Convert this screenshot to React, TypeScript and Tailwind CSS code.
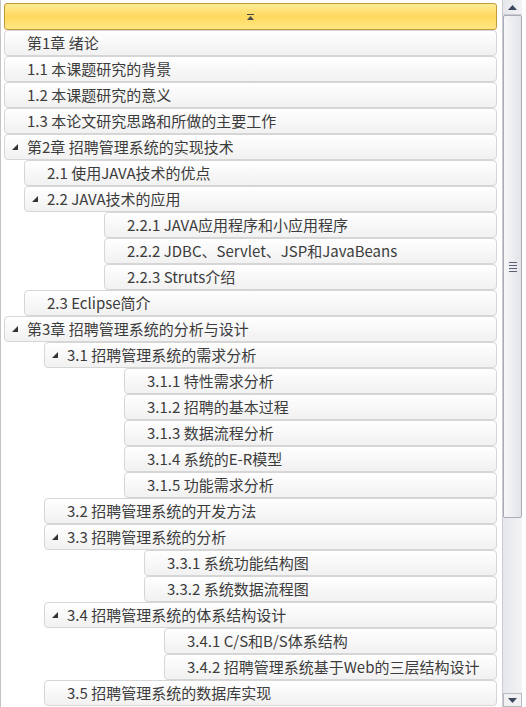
import React from "react";

type Item = { label: string; indent: number; open?: boolean };

const items: Item[] = [
  { label: "第1章 绪论", indent: 0 },
  { label: "1.1 本课题研究的背景", indent: 0 },
  { label: "1.2 本课题研究的意义", indent: 0 },
  { label: "1.3 本论文研究思路和所做的主要工作", indent: 0 },
  { label: "第2章 招聘管理系统的实现技术", indent: 0, open: true },
  { label: "2.1 使用JAVA技术的优点", indent: 20 },
  { label: "2.2 JAVA技术的应用", indent: 20, open: true },
  { label: "2.2.1 JAVA应用程序和小应用程序", indent: 100 },
  { label: "2.2.2 JDBC、Servlet、JSP和JavaBeans", indent: 100 },
  { label: "2.2.3 Struts介绍", indent: 100 },
  { label: "2.3 Eclipse简介", indent: 20 },
  { label: "第3章 招聘管理系统的分析与设计", indent: 0, open: true },
  { label: "3.1 招聘管理系统的需求分析", indent: 40, open: true },
  { label: "3.1.1 特性需求分析", indent: 120 },
  { label: "3.1.2 招聘的基本过程", indent: 120 },
  { label: "3.1.3 数据流程分析", indent: 120 },
  { label: "3.1.4 系统的E-R模型", indent: 120 },
  { label: "3.1.5 功能需求分析", indent: 120 },
  { label: "3.2 招聘管理系统的开发方法", indent: 40 },
  { label: "3.3 招聘管理系统的分析", indent: 40, open: true },
  { label: "3.3.1 系统功能结构图", indent: 140 },
  { label: "3.3.2 系统数据流程图", indent: 140 },
  { label: "3.4 招聘管理系统的体系结构设计", indent: 40, open: true },
  { label: "3.4.1 C/S和B/S体系结构", indent: 160 },
  { label: "3.4.2 招聘管理系统基于Web的三层结构设计", indent: 160 },
  { label: "3.5 招聘管理系统的数据库实现", indent: 40 },
];

const indentClass: Record<number, string> = {
  0: "ml-0",
  20: "ml-[20px]",
  40: "ml-[40px]",
  100: "ml-[100px]",
  120: "ml-[120px]",
  140: "ml-[140px]",
  160: "ml-[160px]",
};

function Arrow() {
  return (
    <svg width="6" height="6" viewBox="0 0 6 6" className="absolute left-[7px] top-[9px]">
      <polygon points="6,0 6,6 0,6" fill="#333" />
    </svg>
  );
}

function Row({ item }: { item: Item }) {
  return (
    <div
      className={`relative h-[26px] shrink-0 rounded-[4px] border border-[#d6d6d6] bg-gradient-to-b from-white to-[#f1f1f1] pl-[22px] text-[15px] leading-[24px] text-[#3c3c3c] whitespace-nowrap ${indentClass[item.indent]}`}
    >
      {item.open && <Arrow />}
      {item.label}
    </div>
  );
}

function Scrollbar() {
  return (
    <div className="flex h-[707px] w-[20px] flex-col border-l border-[#c9cad2] bg-gradient-to-r from-[#e6e7eb] to-[#f3f3f5]">
      <div className="flex h-[15px] items-center justify-center border-b border-[#c9cad2]">
        <svg width="9" height="5" viewBox="0 0 9 5">
          <polygon points="4.5,0 9,5 0,5" fill="#3e4760" />
        </svg>
      </div>
      <div className="flex h-[503px] items-center justify-center rounded-[2px] border border-[#a9abb6] bg-gradient-to-r from-[#f7f7f9] to-[#e3e4e9]">
        <div className="flex flex-col gap-[2px]">
          <div className="h-px w-[8px] bg-[#5b6179]" />
          <div className="h-px w-[8px] bg-[#5b6179]" />
          <div className="h-px w-[8px] bg-[#5b6179]" />
          <div className="h-px w-[8px] bg-[#5b6179]" />
        </div>
      </div>
      <div className="flex-1" />
      <div className="flex h-[14px] items-center justify-center border border-[#b8bac4] bg-[#f1f1f3]">
        <svg width="9" height="5" viewBox="0 0 9 5">
          <polygon points="0,0 9,0 4.5,5" fill="#3e4760" />
        </svg>
      </div>
    </div>
  );
}

export default function App() {
  return (
    <div
      className="flex h-[707px] w-[526px] overflow-hidden bg-white"
      style={{ fontFamily: '"Noto Sans CJK SC", "Noto Sans", sans-serif' }}
    >
      <div className="flex w-[502px] flex-col border-l border-[#c4c4c4] pl-[3px] pr-[5px] pt-[3px]">
        <div className="flex h-[27px] shrink-0 items-center justify-center rounded-[3px] border border-[#c49a3c] bg-gradient-to-b from-[#ffeb94] via-[#ffd95e] to-[#ffe783]">
          <svg width="7" height="6" viewBox="0 0 7 6">
            <rect x="0" y="0" width="7" height="1" fill="#4a4a4a" />
            <polygon points="3.5,2 7,6 0,6" fill="#4a4a4a" />
          </svg>
        </div>
        {items.map((it) => (
          <Row key={it.label} item={it} />
        ))}
      </div>
      <Scrollbar />
    </div>
  );
}
